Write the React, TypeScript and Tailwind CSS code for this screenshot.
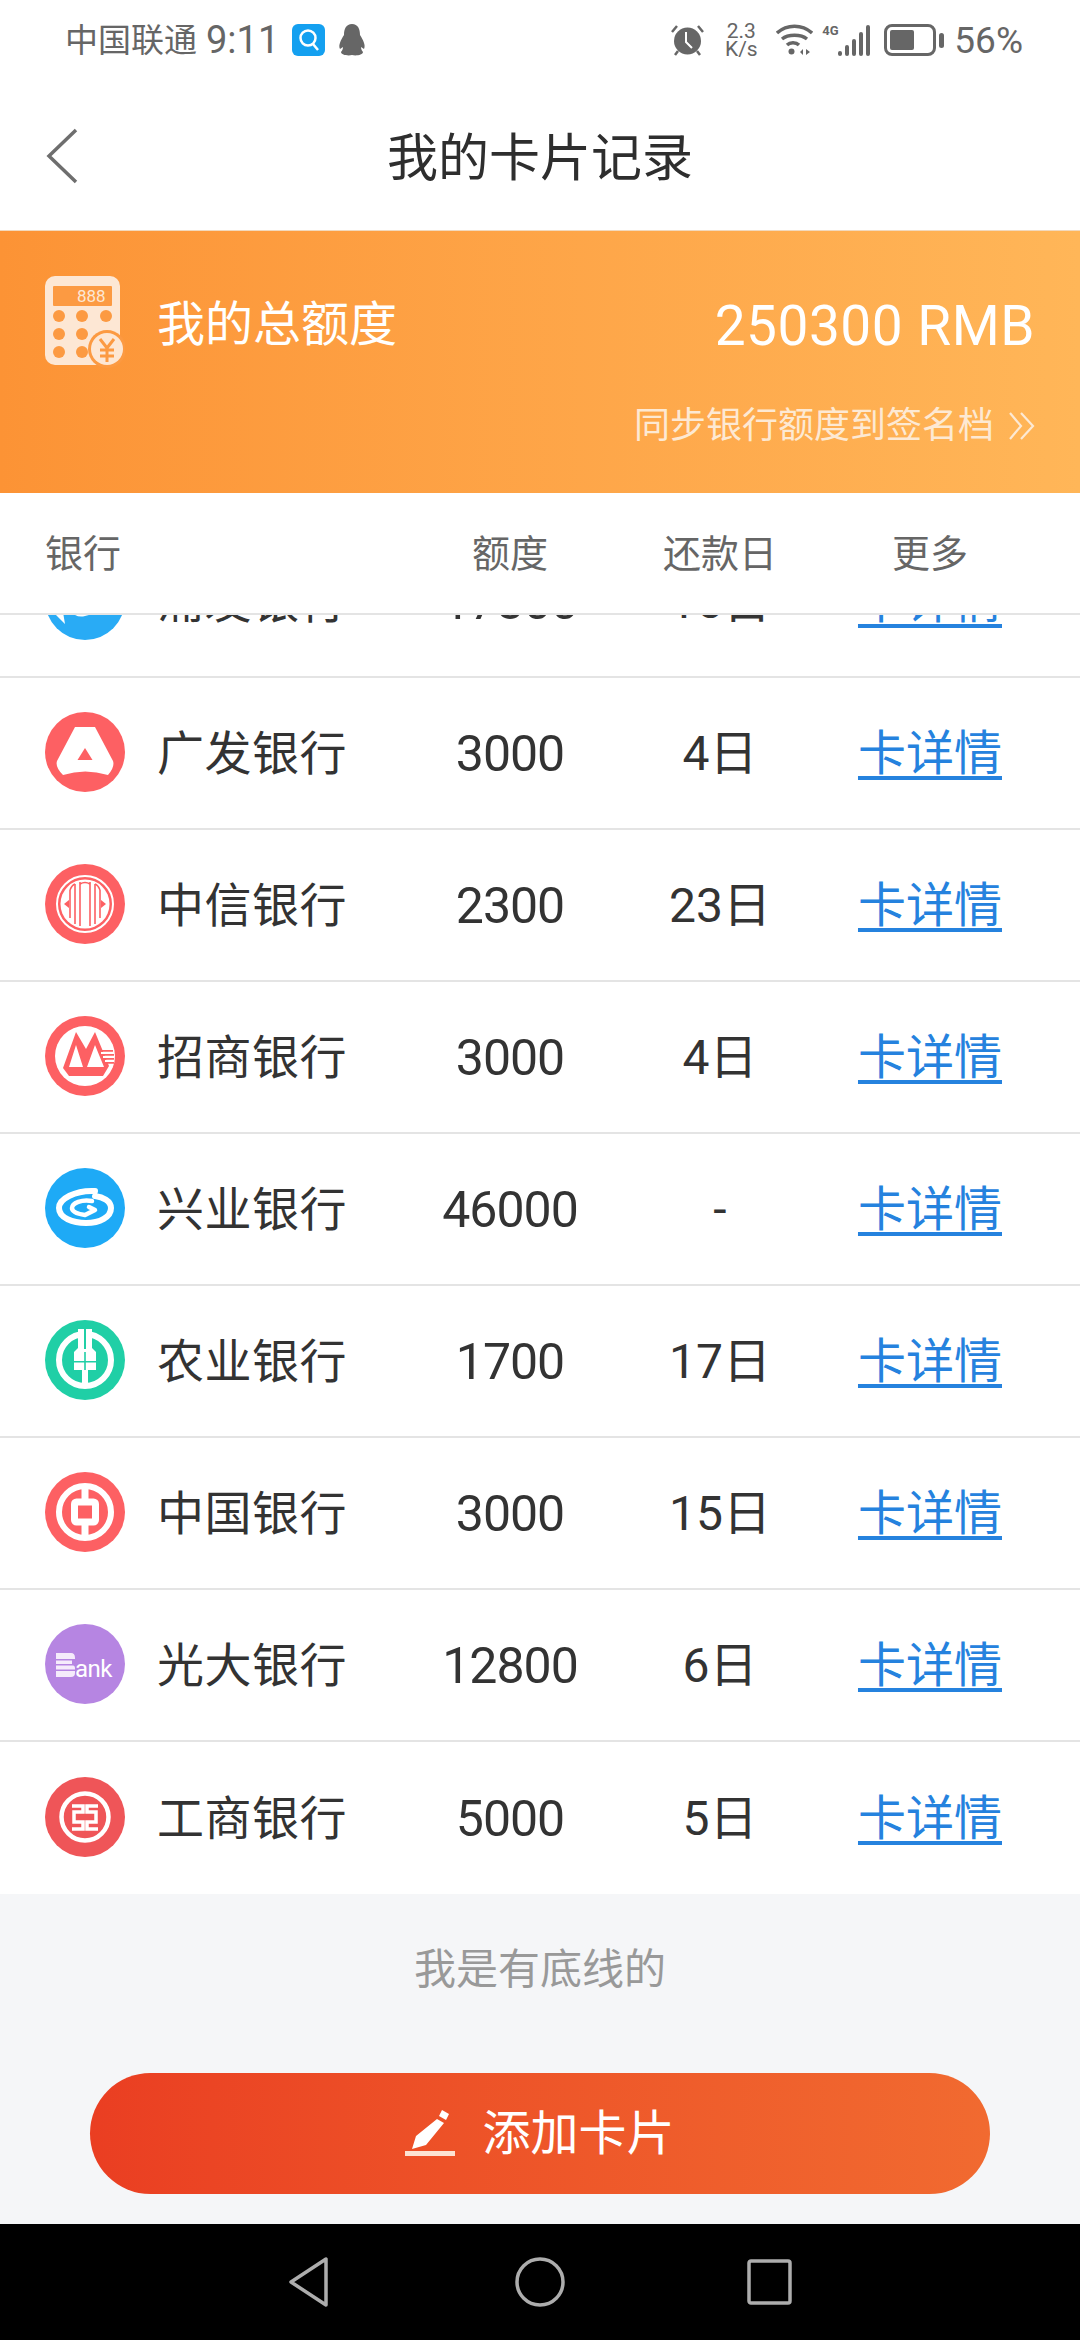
const banks = [
  { name: '浦发银行', quota: '17300', day: '15日', color: '#29abf5', logo: 'spdb' },
  { name: '广发银行', quota: '3000', day: '4日', color: '#fd6063', logo: 'gf' },
  { name: '中信银行', quota: '2300', day: '23日', color: '#fd6063', logo: 'citic' },
  { name: '招商银行', quota: '3000', day: '4日', color: '#fd6063', logo: 'cmb' },
  { name: '兴业银行', quota: '46000', day: '-', color: '#1eaaf6', logo: 'cib' },
  { name: '农业银行', quota: '1700', day: '17日', color: '#20cfa6', logo: 'abc' },
  { name: '中国银行', quota: '3000', day: '15日', color: '#fd6063', logo: 'boc' },
  { name: '光大银行', quota: '12800', day: '6日', color: '#b685e2', logo: 'bank' },
  { name: '工商银行', quota: '5000', day: '5日', color: '#ef5558', logo: 'icbc' },
];

function BankLogo({ logo, color }: { logo: string; color: string }) {
  return (
    <svg width="80" height="80" viewBox="0 0 80 80" className="shrink-0">
      <circle cx="40" cy="40" r="40" fill={color} />
      {logo === 'spdb' && (
        <path d="M8 52l12 12-2-12zM26 52q6 6 14 4t14-4z" fill="#fff" />
      )}
      {logo === 'gf' && (
        <g>
          <path d="M30 15H50L68 49Q70 55 63 63Q40 56 18 63Q10 55 12 49Z" fill="#fff" />
          <path d="M40 36l7.500 12h-15z" fill={color} />
        </g>
      )}
      {logo === 'citic' && (
        <g>
          <circle cx="40" cy="40" r="28" fill="none" stroke="#fff" strokeWidth="2" />
          <circle cx="40" cy="40" r="24.500" fill="#fff" />
          <g fill="none" stroke={color} strokeWidth="1.600">
            <path d="M25 26v28M30 20v40M35 18v44M45 18v44M50 20v40M55 26v28" />
            <path d="M25 26q2-5 5-6M55 26q-2-5-5-6M35 20q5-3 10 0" />
          </g>
          <path d="M19 40l5-4v8zM61 40l-5-4v8z" fill={color} />
        </g>
      )}
      {logo === 'cmb' && (
        <g>
          <circle cx="40" cy="40" r="30" fill="#fff" />
          <path d="M31 16L41 33L50 16L64 50L58 60H24L18 52Z" fill={color} />
          <path d="M31 29L24 51H38ZM50 29L42 51H59Z" fill="#fff" />
          <path d="M56 34h12v1.800H56zM58 38h11v1.800H58zM60 42h9v1.800H60zM61 46h8v1.800H61z" fill={color} />
          <path d="M56 36h12v2H56zM58 40h11v2H58zM60 44h9v2H60z" fill="#fff" />
        </g>
      )}
      {logo === 'cib' && (
        <g fill="none" stroke="#fff" strokeLinecap="round">
          <path d="M50 23C30 22 14 31 14 40C14 50 28 55 41 55C55 55 66 49 66 40C66 33 58 29 50 28" strokeWidth="6" />
          <path d="M47 33C37 31 27 35 27 40C27 44 33 46 40 47L50 42L44 39" strokeWidth="4.500" strokeLinejoin="round" />
        </g>
      )}
      {logo === 'abc' && (
        <g>
          <circle cx="40" cy="40" r="26" fill="none" stroke="#fff" strokeWidth="6" />
          <path d="M33 9h14v19l4 4v18H43v16h-6V50H29V32l4-4z" fill="#fff" />
          <path d="M39 9h2v20h-2zM29 41h22v1.500H29zM39.200 32h1.600v18h-1.600z" fill={color} />
        </g>
      )}
      {logo === 'boc' && (
        <g>
          <circle cx="40" cy="40" r="26" fill="none" stroke="#fff" strokeWidth="6" />
          <path d="M36.500 14h7v16h-7zM36.500 50h7v16h-7z" fill="#fff" />
          <rect x="29.500" y="30" width="21" height="20" rx="2" fill="none" stroke="#fff" strokeWidth="7" />
        </g>
      )}
      {logo === 'bank' && (
        <g>
          <path d="M11 29h15q4 0 4 5v1H11zM11 36.500h16v3.500H11zM11 41.500h17q2 0 2 3v1H11zM11 47h19v2q0 4-4 4H11z" fill="#f5ebfb" />
          <text x="30" y="53" fill="#fff" fontSize="24" fontFamily="Roboto, sans-serif" letterSpacing="-0.5">
            ank
          </text>
        </g>
      )}
      {logo === 'icbc' && (
        <g fill="none" stroke="#fff">
          <circle cx="40" cy="40" r="23.500" strokeWidth="4.500" />
          <path d="M27 29H38V35H29V45H38V52H27M53 29H42V35H51V45H42V52H53" strokeWidth="3.500" />
        </g>
      )}
    </svg>
  );
}

function StatusBar() {
  return (
    <div className="h-[60px] flex items-center justify-between pl-[65px] pr-[57px] pt-[20px] text-[#666666]">
      <div className="flex items-center">
        <span className="text-[33px] leading-none">中国联通</span>
        <span className="text-[38px] leading-none ml-[9px] font-['Roboto']">9:11</span>
        <svg width="33" height="32" viewBox="0 0 33 32" className="ml-[13px]">
          <rect width="33" height="32" rx="6" fill="#14a0f0" />
          <circle cx="16" cy="14" r="7.500" fill="none" stroke="#fff" strokeWidth="2.500" />
          <path d="M21 20l5 6" stroke="#fff" strokeWidth="2.500" />
        </svg>
        <svg width="28" height="32" viewBox="0 0 28 32" className="ml-[13px]">
          <path
            d="M14 0c6 0 8 5 8 11 3 5 6 10 4 14l-3-2c0 2 1 4 2 5 0 3-7 4-11 3-4 1-11 0-11-3 1-1 2-3 2-5l-3 2c-2-4 1-9 4-14C6 5 8 0 14 0z"
            fill="#666666"
          />
        </svg>
      </div>
      <div className="flex items-center">
        <svg width="35" height="32" viewBox="0 0 35 32">
          <circle cx="17.500" cy="17" r="13.500" fill="#666666" />
          <path d="M16 8v10l6 6" fill="none" stroke="#fff" strokeWidth="2" />
          <path d="M2 8l5-6M33 8l-5-6" stroke="#666666" strokeWidth="2.500" />
          <path d="M8 27l-3 4M27 27l3 4" stroke="#666666" strokeWidth="2.500" />
        </svg>
        <div className="ml-[18px] w-[36px] text-center text-[21px] leading-[18px] font-['Roboto']">
          2.3
          <br />
          K/s
        </div>
        <svg width="37" height="32" viewBox="0 0 37 32" className="ml-[17px]">
          <g fill="none" stroke="#666666" strokeWidth="3.400">
            <path d="M1 9c10-9 25-9 35 0" />
            <path d="M6 15c6-5 19-5 25 0" />
            <path d="M11 21c3-3 9-3 12 0" />
          </g>
          <circle cx="15.500" cy="27.500" r="3" fill="#666666" />
          <path d="M24 28l3-3v6zM30 25v6l4-3z" fill="#666666" />
        </svg>
        <div className="relative w-[48px] h-[32px] ml-[9px]">
          <span className="absolute left-0 top-0 text-[13px] leading-[14px] font-bold font-['Roboto']">4G</span>
          <div className="absolute right-0 bottom-0 flex items-end gap-[3px]">
            <div className="w-[4px] h-[5px] rounded-sm bg-[#666666]" />
            <div className="w-[4px] h-[11px] rounded-sm bg-[#666666]" />
            <div className="w-[4px] h-[17px] rounded-sm bg-[#666666]" />
            <div className="w-[4px] h-[24px] rounded-sm bg-[#666666]" />
            <div className="w-[4px] h-[31px] rounded-sm bg-[#666666]" />
          </div>
        </div>
        <div className="ml-[14px] w-[52px] h-[32px] rounded-[8px] border-[3px] border-[#666666] p-[3px]">
          <div className="h-full w-[24px] rounded-[2px] bg-[#666666]" />
        </div>
        <div className="ml-[3px] w-[5px] h-[15px] rounded-full bg-[#666666]" />
        <span className="ml-[10px] text-[37px] leading-none font-['Roboto']">56%</span>
      </div>
    </div>
  );
}

export default function App() {
  return (
    <div className="w-[1080px] h-[2340px] flex flex-col bg-[#f5f6f8] overflow-hidden font-['Roboto','Noto_Sans_CJK_SC',sans-serif]">
      <div className="bg-white h-[231px] shrink-0 border-b border-[#f2d9bd]">
        <StatusBar />
        <div className="relative h-[170px] flex items-center justify-center">
          <svg width="32" height="56" viewBox="0 0 32 56" className="absolute left-[46px] top-[68px]">
            <path d="M30 2L3 28L30 54" fill="none" stroke="#6e6e6e" strokeWidth="3.500" />
          </svg>
          <div className="text-[51px] text-[#2e2e2e] mt-[28px]">我的卡片记录</div>
        </div>
      </div>

      <div className="h-[262px] shrink-0 bg-gradient-to-r from-[#fc9335] to-[#ffb658] text-white pl-[45px] pr-[45px] pt-[45px]">
        <div className="flex items-start">
          <svg width="80" height="92" viewBox="0 0 80 92" className="shrink-0">
            <rect x="0" y="0" width="75" height="89" rx="10" fill="#fde7d4" />
            <rect x="8" y="10" width="59" height="20" rx="1" fill="#fc9a42" />
            <text x="32" y="26" fill="#fde7d4" fontSize="17" fontFamily="Roboto, sans-serif">
              888
            </text>
            <g fill="#fc9a42">
              <circle cx="14" cy="40" r="6" />
              <circle cx="37" cy="40" r="6" />
              <circle cx="61" cy="40" r="6" />
              <circle cx="14" cy="58" r="6" />
              <circle cx="37" cy="58" r="6" />
              <circle cx="14" cy="76" r="6" />
              <circle cx="37" cy="76" r="6" />
              <circle cx="62" cy="73" r="19" />
            </g>
            <circle cx="62" cy="73" r="16" fill="#fde7d4" />
            <path d="M55 63l7 9 7-9M55 74h14M55 80h14M62 72v14" fill="none" stroke="#fc9a42" strokeWidth="3" />
          </svg>
          <div className="ml-[32px] mt-[19px] text-[48px] leading-[60px]">我的总额度</div>
          <div className="ml-auto mt-[19px] text-[55px] leading-[62px] tracking-[0.500px]">250300 RMB</div>
        </div>
        <div className="mt-[33px] flex items-center justify-end text-[#fde9d3]">
          <span className="text-[36px] leading-[50px]">同步银行额度到签名档</span>
          <svg width="28" height="28" viewBox="0 0 28 28" className="ml-[14px] mr-[-1px]">
            <path d="M2 1l11 13L2 27M13 1l12 13-12 13" fill="none" stroke="#fde9d3" strokeWidth="2.200" />
          </svg>
        </div>
      </div>

      <div className="h-[122px] shrink-0 bg-white flex items-center border-b-2 border-[#e4e4e4] text-[38px] text-[#666666] pl-[45px] pt-[2px]">
        <div className="w-[370px]">银行</div>
        <div className="w-[190px] text-center">额度</div>
        <div className="w-[230px] text-center">还款日</div>
        <div className="w-[190px] text-center">更多</div>
      </div>

      <div className="h-[1279px] shrink-0 bg-white overflow-hidden">
        <div className="mt-[-89px]">
          {banks.map((b) => (
            <div key={b.name} className="h-[152px] flex items-center border-b-2 last:border-b-0 border-[#e4e4e4] pl-[45px] pb-[2px] text-[#333333]">
              <BankLogo logo={b.logo} color={b.color} />
              <div className="w-[290px] pl-[32px] mt-[4px] text-[47px] tracking-[0.500px] shrink-0">{b.name}</div>
              <div className="w-[190px] text-center mt-[4px] text-[50px] tracking-[-1px] shrink-0">{b.quota}</div>
              <div className="w-[230px] text-center mt-[4px] text-[48px] shrink-0">{b.day}</div>
              <div className="w-[190px] text-center mt-[4px] text-[48px] shrink-0 text-[#2582de] underline underline-offset-[6px]">卡详情</div>
            </div>
          ))}
        </div>
      </div>

      <div className="flex-1 flex flex-col items-center">
        <div className="mt-[46px] text-[42px] leading-[60px] text-[#999999]">我是有底线的</div>
        <div className="mt-[73px] w-[900px] h-[121px] rounded-full bg-gradient-to-r from-[#ea3e22] to-[#f16a30] flex items-center justify-center text-white">
          <svg width="50" height="47" viewBox="0 0 50 47">
            <path d="M37 0l7 4-3 6-7-4zM32 9l7 4-18 22-14 4 4-13z" fill="#fff" />
            <path d="M0 41h50v5H0z" fill="#fde2d2" />
          </svg>
          <div className="ml-[27px] text-[48px]">添加卡片</div>
        </div>
      </div>

      <div className="h-[116px] shrink-0 bg-black flex items-center justify-center">
        <svg width="41" height="50" viewBox="0 0 41 50">
          <path d="M38 2v46L3 25z" fill="none" stroke="#adadad" strokeWidth="3.500" strokeLinejoin="round" />
        </svg>
        <svg width="50" height="50" viewBox="0 0 50 50" className="ml-[186px]">
          <circle cx="25" cy="25" r="23" fill="none" stroke="#adadad" strokeWidth="3.500" />
        </svg>
        <svg width="45" height="46" viewBox="0 0 45 46" className="ml-[182px]">
          <rect x="2" y="2" width="41" height="42" rx="2" fill="none" stroke="#adadad" strokeWidth="3.500" />
        </svg>
      </div>
    </div>
  );
}
